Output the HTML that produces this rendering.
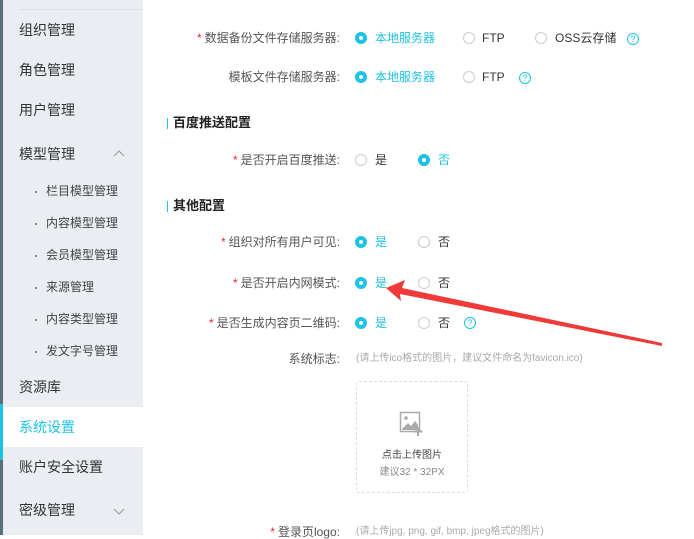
<!DOCTYPE html>
<html><head><meta charset="utf-8"><style>
*{margin:0;padding:0;box-sizing:border-box}
body{width:694px;height:535px;overflow:hidden;background:#fff;font-family:"Liberation Sans","Noto Sans CJK SC",sans-serif;position:relative;color:#333}
.sb{position:absolute;left:0;top:0;width:143px;height:535px;background:#eaedf1}
.strip{position:absolute;left:0;top:0;width:3px;height:535px;background:#5b6e7c}
.a{position:absolute;white-space:nowrap;line-height:14px}
.it{font-size:14px;color:#333;left:19px;line-height:16px}
.sub{font-size:12px;color:#444;left:46px}
.dot{position:absolute;left:35px;width:2px;height:2px;background:#888}
.lbl{font-size:12px;color:#555;text-align:right;right:354px}
.lbl i{color:#f5222d;font-style:normal;margin-right:3px}
.r{position:absolute;width:12px;height:12px;border-radius:50%;border:1px solid #ccc;background:#fff}
.r.on{border:4px solid #1ec3e3}
.t{font-size:12px;color:#333}
.t.on{color:#1ec3e3}
.q{position:absolute;width:12px;height:12px;border:1px solid #1ec3e3;border-radius:50%;color:#1ec3e3;font-size:9px;line-height:10px;text-align:center}
.sec{font-size:13px;font-weight:bold;color:#222;left:173px}
.bar{position:absolute;left:167px;width:1px;height:11px;background:#1ec3e3}
</style></head><body>
<div class="sb"></div>
<div class="strip"></div>
<div class="a" style="left:19px;top:9px;width:124px;height:1px;background:#dde1e6"></div>
<div class="a it" style="top:22px">组织管理</div>
<div class="a it" style="top:62px">角色管理</div>
<div class="a it" style="top:102px">用户管理</div>
<div class="a it" style="top:146px">模型管理</div>
<svg class="a" style="left:112px;top:149px" width="14" height="10"><path d="M2 7 L7 2 L12 7" fill="none" stroke="#999" stroke-width="1"/></svg>
<div class="dot" style="top:191px"></div><div class="a sub" style="top:184px">栏目模型管理</div>
<div class="dot" style="top:223px"></div><div class="a sub" style="top:216px">内容模型管理</div>
<div class="dot" style="top:255px"></div><div class="a sub" style="top:248px">会员模型管理</div>
<div class="dot" style="top:287px"></div><div class="a sub" style="top:280px">来源管理</div>
<div class="dot" style="top:319px"></div><div class="a sub" style="top:312px">内容类型管理</div>
<div class="dot" style="top:351px"></div><div class="a sub" style="top:344px">发文字号管理</div>
<div class="a it" style="top:379px">资源库</div>
<div class="a" style="left:0;top:407px;width:143px;height:40px;background:#fff"></div>
<div class="a" style="left:0;top:404px;width:3px;height:56px;background:#1ec3e3"></div>
<div class="a it" style="top:419px;color:#1ec3e3">系统设置</div>
<div class="a it" style="top:459px">账户安全设置</div>
<div class="a it" style="top:502px">密级管理</div>
<svg class="a" style="left:112px;top:506px" width="14" height="10"><path d="M2 3 L7 8 L12 3" fill="none" stroke="#999" stroke-width="1"/></svg>

<div class="a lbl" style="top:31px"><i>*</i>数据备份文件存储服务器:</div>
<div class="r on" style="left:355px;top:32px"></div><div class="a t on" style="left:375px;top:31px">本地服务器</div>
<div class="r" style="left:463px;top:32px"></div><div class="a t" style="left:482px;top:31px">FTP</div>
<div class="r" style="left:535px;top:32px"></div><div class="a t" style="left:555px;top:31px">OSS云存储</div>
<div class="q" style="left:627px;top:33px">?</div>

<div class="a lbl" style="top:70px">模板文件存储服务器:</div>
<div class="r on" style="left:355px;top:71px"></div><div class="a t on" style="left:375px;top:70px">本地服务器</div>
<div class="r" style="left:463px;top:71px"></div><div class="a t" style="left:482px;top:70px">FTP</div>
<div class="q" style="left:519px;top:72px">?</div>

<div class="bar" style="top:118px"></div><div class="a sec" style="top:116px">百度推送配置</div>
<div class="a lbl" style="top:153px"><i>*</i>是否开启百度推送:</div>
<div class="r" style="left:355px;top:154px"></div><div class="a t" style="left:375px;top:153px">是</div>
<div class="r on" style="left:418px;top:154px"></div><div class="a t on" style="left:438px;top:153px">否</div>

<div class="bar" style="top:201px"></div><div class="a sec" style="top:199px">其他配置</div>
<div class="a lbl" style="top:235px"><i>*</i>组织对所有用户可见:</div>
<div class="r on" style="left:355px;top:236px"></div><div class="a t on" style="left:375px;top:235px">是</div>
<div class="r" style="left:418px;top:236px"></div><div class="a t" style="left:438px;top:235px">否</div>

<div class="a lbl" style="top:276px"><i>*</i>是否开启内网模式:</div>
<div class="r on" style="left:355px;top:277px"></div><div class="a t on" style="left:375px;top:276px">是</div>
<div class="r" style="left:418px;top:277px"></div><div class="a t" style="left:438px;top:276px">否</div>

<div class="a lbl" style="top:316px"><i>*</i>是否生成内容页二维码:</div>
<div class="r on" style="left:355px;top:317px"></div><div class="a t on" style="left:375px;top:316px">是</div>
<div class="r" style="left:418px;top:317px"></div><div class="a t" style="left:438px;top:316px">否</div>
<div class="q" style="left:464px;top:317px">?</div>

<div class="a lbl" style="top:352px">系统标志:</div>
<div class="a" style="left:356px;top:353px;font-size:10px;color:#aaa;line-height:12px">(请上传ico格式的图片，建议文件命名为favicon.ico)</div>
<div class="a" style="left:356px;top:381px;width:112px;height:112px;border:1px dashed #ddd;border-radius:3px"></div>
<svg class="a" style="left:399px;top:411px" width="26" height="26"><rect x="1.5" y="1.5" width="19" height="19" fill="none" stroke="#aaa" stroke-width="1.5"/><circle cx="7" cy="7" r="1.8" fill="#aaa"/><path d="M3 18 L9 12 L12 15 L16 10 L19 14 L19 19 L3 19Z" fill="#aaa"/><path d="M19 16 V25 M14.5 20.5 H23.5" stroke="#aaa" stroke-width="2"/></svg>
<div class="a" style="left:356px;top:450px;width:112px;text-align:center;font-size:10px;color:#444;line-height:12px">点击上传图片</div>
<div class="a" style="left:356px;top:467px;width:112px;text-align:center;font-size:10px;color:#888;line-height:12px">建议32 * 32PX</div>

<div class="a lbl" style="top:525px"><i>*</i>登录页logo:</div>
<div class="a" style="left:356px;top:526px;font-size:10px;color:#aaa;line-height:12px">(请上传jpg, png, gif, bmp, jpeg格式的图片)</div>

<svg class="a" style="left:0;top:0" width="694" height="535"><polygon points="386,288 405,280 402,288 662,343 662,346 400,294 401,301" fill="#f03a3a"/></svg>
</body></html>
